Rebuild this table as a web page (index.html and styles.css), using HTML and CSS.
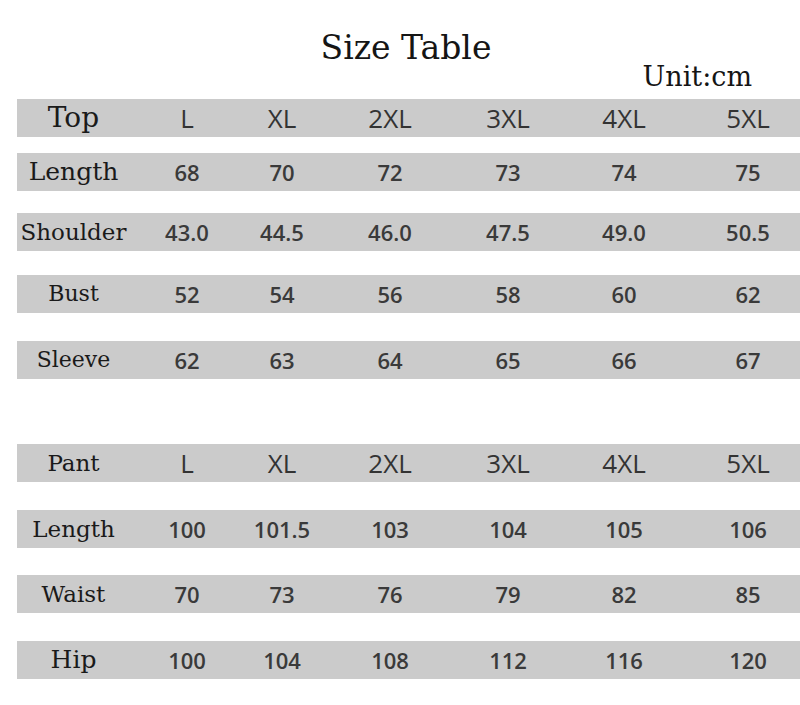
FILE: index.html
```html
<!DOCTYPE html>
<html lang="en">
<head>
<meta charset="utf-8">
<title>Size Table</title>
<link rel="stylesheet" href="styles.css">
</head>
<body>
<div class="page">
  <h1 class="title">Size Table</h1>
  <div class="unit">Unit:cm</div>

  <div class="section section-top">
    <div class="row head">
      <div class="lbl lbl-xl">Top</div>
      <div class="c">L</div><div class="c">XL</div><div class="c">2XL</div><div class="c">3XL</div><div class="c">4XL</div><div class="c">5XL</div>
    </div>
    <div class="row">
      <div class="lbl lbl-lg">Length</div>
      <div class="c">68</div><div class="c">70</div><div class="c">72</div><div class="c">73</div><div class="c">74</div><div class="c">75</div>
    </div>
    <div class="row">
      <div class="lbl">Shoulder</div>
      <div class="c">43.0</div><div class="c">44.5</div><div class="c">46.0</div><div class="c">47.5</div><div class="c">49.0</div><div class="c">50.5</div>
    </div>
    <div class="row">
      <div class="lbl lbl-sm">Bust</div>
      <div class="c">52</div><div class="c">54</div><div class="c">56</div><div class="c">58</div><div class="c">60</div><div class="c">62</div>
    </div>
    <div class="row">
      <div class="lbl lbl-sm">Sleeve</div>
      <div class="c">62</div><div class="c">63</div><div class="c">64</div><div class="c">65</div><div class="c">66</div><div class="c">67</div>
    </div>
  </div>

  <div class="section section-pant">
    <div class="row head">
      <div class="lbl">Pant</div>
      <div class="c">L</div><div class="c">XL</div><div class="c">2XL</div><div class="c">3XL</div><div class="c">4XL</div><div class="c">5XL</div>
    </div>
    <div class="row">
      <div class="lbl">Length</div>
      <div class="c">100</div><div class="c">101.5</div><div class="c">103</div><div class="c">104</div><div class="c">105</div><div class="c">106</div>
    </div>
    <div class="row">
      <div class="lbl">Waist</div>
      <div class="c">70</div><div class="c">73</div><div class="c">76</div><div class="c">79</div><div class="c">82</div><div class="c">85</div>
    </div>
    <div class="row">
      <div class="lbl lbl-lg">Hip</div>
      <div class="c">100</div><div class="c">104</div><div class="c">108</div><div class="c">112</div><div class="c">116</div><div class="c">120</div>
    </div>
  </div>
</div>
</body>
</html>
```

FILE: styles.css
```css
html, body {
  margin: 0;
  padding: 0;
  background: #ffffff;
  overflow: hidden;
}

.page {
  width: 800px;
  height: 705px;
  overflow: hidden;
  font-family: "DejaVu Serif", "Liberation Serif", serif;
  color: #1a1a1a;
}

.title {
  margin: 32px 0 0 12px;
  font-size: 33px;
  font-weight: normal;
  line-height: 31px;
  text-align: center;
  color: #151515;
}

.unit {
  margin: 0;
  padding-right: 48px;
  font-size: 27px;
  line-height: 28px;
  text-align: right;
  color: #151515;
}

.section {
  display: flex;
  flex-direction: column;
  margin-left: 17px;
  width: 797px;
}

.section-top {
  margin-top: 8px;
}

.section-top .row:nth-child(2) { margin-top: 16px; }
.section-top .row:nth-child(3) { margin-top: 22px; }
.section-top .row:nth-child(4) { margin-top: 24px; }
.section-top .row:nth-child(5) { margin-top: 28px; }

.section-pant {
  margin-top: 65px;
}

.section-pant .row:nth-child(2) { margin-top: 28px; }
.section-pant .row:nth-child(3) { margin-top: 27px; }
.section-pant .row:nth-child(4) { margin-top: 28px; }

.row {
  display: grid;
  grid-template-columns: 123px 94px 96px 120px 116px 116px 132px;
  height: 38px;
  background: #cbcbcb;
  align-items: center;
}

.lbl {
  padding-right: 10px;
  text-align: center;
  font-size: 23px;
  line-height: 30px;
  color: #1a1a1a;
  white-space: nowrap;
}

.lbl-xl { font-size: 28px; }
.lbl-lg { font-size: 25px; }
.lbl-sm { font-size: 22px; }

.c {
  text-align: center;
  font-family: "Open Sans", "DejaVu Sans", sans-serif;
  font-size: 22px;
  font-weight: 600;
  line-height: 30px;
  color: #3a3a3a;
}

.head .c {
  font-size: 26px;
  font-weight: 400;
  color: #333333;
}
```
